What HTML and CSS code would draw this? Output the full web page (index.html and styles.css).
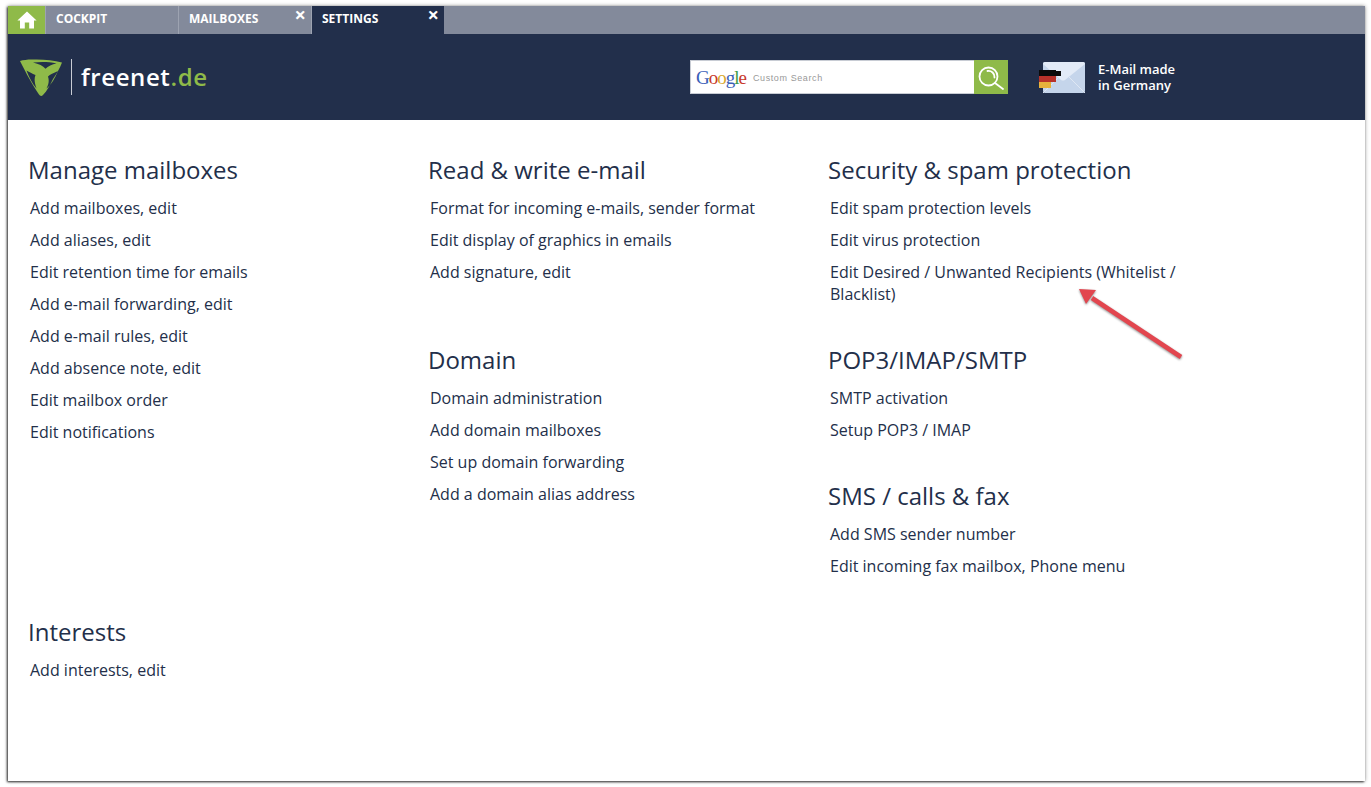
FILE: index.html
```html
<!DOCTYPE html>
<html lang="en">
<head>
<meta charset="utf-8">
<title>freenet.de settings</title>
<link rel="stylesheet" href="styles.css">
</head>
<body>
<div class="window">
  <nav class="tabs">
    <a class="home" aria-label="Home">
      <svg width="20" height="18" viewBox="0 0 20 18"><path d="M10 0.5 L19.6 9.4 L17 9.4 L17 17.5 L12.2 17.5 L12.2 11.5 L7.8 11.5 L7.8 17.5 L3 17.5 L3 9.4 L0.4 9.4 Z" fill="#fff"/></svg>
    </a>
    <a class="tab">COCKPIT</a>
    <a class="tab">MAILBOXES<span class="close">×</span></a>
    <a class="tab active">SETTINGS<span class="close">×</span></a>
  </nav>
  <header class="masthead">
    <div class="logo">
      <svg class="logo-mark" width="44" height="38" viewBox="0 0 44 38">
        <path fill="#8fba49" fill-rule="evenodd" d="M0 3 C3 2 8 1.5 11 1.5 C22 1 33 2 42 4.5 C40 10 37 15 33 21 C30 27 27 33 23 37 C21.5 38.5 20 38 19 36.5 C13 28 6 15 0 3 Z M13 4.6 C19 6 23 8 25.5 10.8 C28 8 32 6 36.5 5.4 C29 3.8 20 3.8 13 4.6 Z M6.5 12.5 C9 19 12.5 26 16.5 30.5 C14.5 25 14 20.5 15.5 17 C12 15.5 9.5 14 6.5 12.5 Z M38 13 C33.5 15 30 16.5 28 18.5 C29.5 23 28.5 26.5 26.5 30.5 C31.5 26.5 35 20 38 13 Z"/>
      </svg>
      <span class="logo-rule"></span>
      <span class="logo-text">freenet<em>.de</em></span>
    </div>
    <div class="search">
      <div class="search-box">
        <span class="google"><b class="g-b">G</b><b class="g-r">o</b><b class="g-y">o</b><b class="g-b">g</b><b class="g-g">l</b><b class="g-r">e</b></span>
        <span class="search-hint">Custom Search</span>
      </div>
      <button class="search-btn" aria-label="Search">
        <svg width="28" height="28" viewBox="0 0 28 28" fill="none" stroke="#fff" stroke-width="1.8" stroke-linecap="round"><circle cx="11.5" cy="13.5" r="9"/><path d="M10.5 8 A6 6 0 0 1 17.5 14.5"/><path d="M18 20 L26 26"/></svg>
      </button>
    </div>
    <div class="made">
      <svg class="made-icon" width="48" height="34" viewBox="0 0 48 34">
        <rect x="5" y="2" width="42" height="31" rx="2" fill="#c5d5eb"/>
        <path d="M5 4 Q5 2 7 2 L45 2 Q47 2 47 4 L27 20 Q25 21 23 20 Z" fill="#e3ebf7"/>
        <path d="M5 33 L21 17 M47 33 L31 17" stroke="#dfe7f3" stroke-width="1"/>
        <rect x="1" y="10" width="17" height="1" fill="#0b0b0b"/>
        <rect x="1" y="11" width="22" height="5" fill="#0b0b0b"/>
        <rect x="1" y="16" width="17" height="6" fill="#b8322a"/>
        <rect x="1" y="22" width="12" height="6" fill="#e7b23c"/>
      </svg>
      <p class="made-text">E-Mail made<br>in Germany</p>
    </div>
  </header>
  <main class="settings">
    <section class="group group-manage">
      <h2>Manage mailboxes</h2>
      <ul>
        <li>Add mailboxes, edit</li>
        <li>Add aliases, edit</li>
        <li>Edit retention time for emails</li>
        <li>Add e-mail forwarding, edit</li>
        <li>Add e-mail rules, edit</li>
        <li>Add absence note, edit</li>
        <li>Edit mailbox order</li>
        <li>Edit notifications</li>
      </ul>
    </section>
    <section class="group">
      <h2>Read &amp; write e-mail</h2>
      <ul>
        <li>Format for incoming e-mails, sender format</li>
        <li>Edit display of graphics in emails</li>
        <li>Add signature, edit</li>
      </ul>
    </section>
    <section class="group">
      <h2>Security &amp; spam protection</h2>
      <ul>
        <li>Edit spam protection levels</li>
        <li>Edit virus protection</li>
        <li>Edit Desired / Unwanted Recipients (Whitelist / Blacklist)</li>
      </ul>
    </section>
    <section class="group group-domain">
      <h2>Domain</h2>
      <ul>
        <li>Domain administration</li>
        <li>Add domain mailboxes</li>
        <li>Set up domain forwarding</li>
        <li>Add a domain alias address</li>
      </ul>
    </section>
    <section class="group">
      <h2>POP3/IMAP/SMTP</h2>
      <ul>
        <li>SMTP activation</li>
        <li>Setup POP3 / IMAP</li>
      </ul>
    </section>
    <section class="group group-sms">
      <h2>SMS / calls &amp; fax</h2>
      <ul>
        <li>Add SMS sender number</li>
        <li>Edit incoming fax mailbox, Phone menu</li>
      </ul>
    </section>
    <section class="group group-interests">
      <h2>Interests</h2>
      <ul>
        <li>Add interests, edit</li>
      </ul>
    </section>
  </main>
  <svg class="arrow" width="110" height="76" viewBox="0 0 110 76">
    <g class="arrow-art">
      <path d="M103 69 L14 10" stroke="#e2464f" stroke-width="4.5" fill="none"/>
      <path d="M1 1 L18 2 L8 16 Z" fill="#e2464f"/>
    </g>
  </svg>
</div>
</body>
</html>
```
FILE: styles.css
```css
* { box-sizing: border-box; }
html, body { height: 100%; }
body {
  margin: 0;
  padding: 6px 6px 6px 8px;
  background: #fff;
  overflow: hidden;
  font-family: "Open Sans", "Liberation Sans", sans-serif;
  color: #232f4a;
}
.window {
  position: relative;
  height: 100%;
  display: flex;
  flex-direction: column;
  background: #fff;
  box-shadow: -1px 1px 2px rgba(0, 0, 0, .75), 0 0 4px rgba(0, 0, 0, .4);
}
.tabs {
  display: flex;
  gap: 1px;
  height: 28px;
  background: #838a9b;
}
.home {
  width: 38px;
  margin-right: -1px;
  background: #8fba49;
  display: flex;
  align-items: center;
  justify-content: center;
}
.tab {
  width: 132px;
  padding: 0 5px 3px 10px;
  display: flex;
  align-items: center;
  justify-content: space-between;
  background: #838a9b;
  color: #fff;
  font-size: 12px;
  font-weight: 700;
  box-shadow: -1px 0 0 #9da3b1;
}
.tab:first-of-type { box-shadow: none; }
.tab.active { background: #222f4b; }
.close {
  align-self: flex-start;
  font-size: 20px;
  font-weight: 700;
  line-height: 18px;
}
.masthead {
  display: flex;
  align-items: center;
  height: 86px;
  padding-left: 12px;
  background: #222f4b;
}
.logo { display: flex; align-items: center; }
.logo-mark { display: block; }
.logo-rule {
  width: 1px;
  height: 36px;
  margin-left: 7px;
  background: #c9ccd4;
}
.logo-text {
  margin-left: 9px;
  color: #fff;
  font-size: 24px;
  letter-spacing: .6px;
  line-height: 36px;
  font-weight: 600;
}
.logo-text em { font-style: normal; color: #8fba49; }
.search {
  display: flex;
  height: 34px;
  margin-left: auto;
}
.search-box {
  width: 284px;
  display: flex;
  align-items: center;
  padding-left: 5px;
  background: #fff;
  border: 1px solid #c8ccd4;
  border-right: 0;
}
.google {
  font-family: "Liberation Serif", serif;
  font-size: 19px;
  letter-spacing: -1px;
  line-height: 1;
}
.google b { font-weight: 400; }
.g-b { color: #3a5fb8; }
.g-r { color: #c8392b; }
.g-y { color: #d9a72b; }
.g-g { color: #3c9a48; }
.search-hint {
  margin: 2px 0 0 7px;
  font-size: 9px;
  letter-spacing: .6px;
  color: #999;
  font-family: "Liberation Sans", sans-serif;
}
.search-btn {
  width: 34px;
  padding: 0;
  border: 0;
  background: #8fba49;
  display: flex;
  align-items: center;
  justify-content: center;
}
.made {
  display: flex;
  align-items: center;
  width: 327px;
  margin-left: 30px;
}
.made-icon { display: block; }
.made-text {
  margin: -1px 0 0 12px;
  color: #fff;
  font-size: 13px;
  font-weight: 600;
  line-height: 16px;
}
.settings {
  flex: 1;
  display: grid;
  grid-template-columns: 400px 400px 400px;
  grid-auto-rows: max-content;
  row-gap: 33px;
  padding: 33px 0 0 20px;
}
.group h2 {
  margin: 0 0 5px;
  font-size: 24px;
  font-weight: 400;
  line-height: 34px;
}
.group ul {
  margin: 0;
  padding: 0 0 0 2px;
  list-style: none;
  max-width: 360px;
}
.group li {
  padding: 5px 0;
  font-size: 16px;
  line-height: 22px;
}
.group-manage { grid-column: 1; grid-row: 1 / span 3; }
.group-domain { grid-column: 2; grid-row: 2 / span 2; }
.group-sms { grid-column: 3; grid-row: 3; }
.group-interests { grid-column: 1; grid-row: 4; }
.arrow {
  position: absolute;
  left: 1070px;
  top: 282px;
  overflow: visible;
}
.arrow-art { filter: drop-shadow(0 1px 1px rgba(0, 0, 0, .45)); }
```
